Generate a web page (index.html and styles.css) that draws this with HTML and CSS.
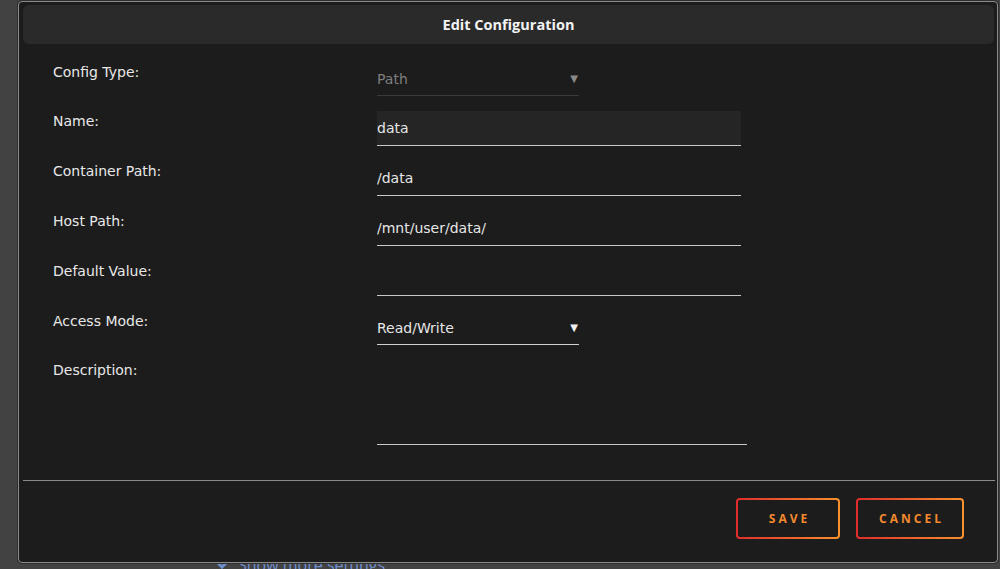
FILE: index.html
```html
<!DOCTYPE html>
<html lang="en">
<head>
    <meta charset="UTF-8">
    <title>Edit Configuration</title>
    <link rel="stylesheet" href="styles.css">
</head>
<body>
    <div class="page">
        <a class="more-link" href="#">
            <svg class="more-icon" width="14" height="10" viewBox="0 0 14 10"><path d="M1.5 1.5 L7 7 L12.5 1.5" fill="none" stroke="#6f8fd0" stroke-width="3"/></svg>
            Show more settings
        </a>
    </div>

    <div class="dialog">
        <div class="dialog-header">Edit Configuration</div>
        <form class="dialog-form" autocomplete="off">
            <label class="field-label">Config Type:</label>
            <div class="select disabled">
                <span>Path</span>
                <span class="arrow">&#9660;</span>
            </div>

            <label class="field-label">Name:</label>
            <input class="text-input focused" type="text" value="data">

            <label class="field-label">Container Path:</label>
            <input class="text-input" type="text" value="/data">

            <label class="field-label">Host Path:</label>
            <input class="text-input" type="text" value="/mnt/user/data/">

            <label class="field-label">Default Value:</label>
            <input class="text-input" type="text" value="">

            <label class="field-label">Access Mode:</label>
            <div class="select">
                <span>Read/Write</span>
                <span class="arrow">&#9660;</span>
            </div>

            <label class="field-label">Description:</label>
            <textarea class="text-area"></textarea>
        </form>
        <div class="dialog-footer">
            <button class="btn" type="button">Save</button>
            <button class="btn" type="button">Cancel</button>
        </div>
    </div>
</body>
</html>
```

FILE: styles.css
```css
body {
    margin: 0;
    background: #424242;
    font-family: "DejaVu Sans", "Open Sans", sans-serif;
    color: #e6e6e6;
    height: 569px;
    overflow: hidden;
}
.page {
    padding: 554px 0 0 215px;
}
.more-link {
    display: flex;
    align-items: center;
    gap: 9px;
    color: #6f8fd0;
    font-family: "Open Sans", sans-serif;
    font-size: 16px;
    text-decoration: none;
}
.dialog {
    position: absolute;
    top: 1px;
    left: 18px;
    width: 978px;
    height: 560px;
    background: #1c1c1c;
    border: 1px solid #8a8a8a;
    border-radius: 4px;
    box-shadow: 0 0 0 1px #2e2e2e;
    display: flex;
    flex-direction: column;
}
.dialog-header {
    margin: 3px 3px 0 4px;
    height: 39px;
    line-height: 40px;
    background: #2a2a2a;
    border-radius: 6px;
    text-align: center;
    font-family: "Open Sans", sans-serif;
    font-size: 14.5px;
    font-weight: bold;
    color: #f2f2f2;
}
.dialog-form {
    display: grid;
    grid-template-columns: 324px 370px;
    row-gap: 15px;
    padding: 18px 0 0 34px;
    height: 436px;
    box-sizing: border-box;
    align-content: start;
}
.field-label {
    font-size: 14px;
    line-height: 21px;
    color: #e8e8e8;
}
.text-input,
.text-area,
.select {
    box-sizing: border-box;
    height: 35px;
    border: none;
    border-bottom: 1px solid #c8c8c8;
    background: transparent;
    color: #e6e6e6;
    font-family: inherit;
    font-size: 14px;
    padding: 0;
    outline: none;
    width: 364px;
}
.text-input.focused {
    background: #252525;
}
.select {
    width: 202px;
    height: 34px;
    display: flex;
    align-items: center;
    justify-content: space-between;
    border-bottom-color: #d0d0d0;
}
.select .arrow {
    font-size: 10px;
    margin-right: 1px;
    color: #f0f0f0;
}
.select.disabled {
    color: #7e7e7e;
    border-bottom-color: #3a3a3a;
}
.select.disabled .arrow {
    color: #8a8a8a;
}
.text-area {
    width: 370px;
    height: 85px;
    resize: none;
}
.dialog-footer {
    margin: 0 2px 0 4px;
    border-top: 1px solid #8a8a8a;
    display: flex;
    justify-content: flex-end;
    gap: 16px;
    padding: 17px 31px 0 0;
}
.btn {
    width: 104px;
    height: 41px;
    border: 2px solid transparent;
    border-radius: 4px;
    background: linear-gradient(#1c1c1c, #1c1c1c) padding-box,
                linear-gradient(90deg, #e22c2c, #f7922d) border-box;
    color: #f2892e;
    font-family: "Open Sans", sans-serif;
    font-size: 12px;
    font-weight: bold;
    letter-spacing: 3px;
    text-transform: uppercase;
    padding: 0 0 0 3px;
    cursor: pointer;
}
.btn + .btn {
    width: 108px;
}
```
